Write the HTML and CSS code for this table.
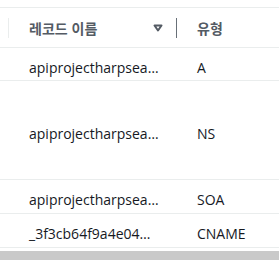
FILE: index.html
```html
<!DOCTYPE html>
<html lang="ko">
<head>
<meta charset="utf-8">
<link rel="stylesheet" href="styles.css">
</head>
<body>
<div class="table">
  <div class="row head">
    <div class="cell lead"><span class="sep light"></span></div>
    <div class="cell name">
      <span class="htext">레코드 이름</span>
      <svg class="sort" width="10" height="8" viewBox="0 0 10 8"><path d="M1.5 1.5 H8.5 L5 6.5 Z" fill="none" stroke="#545b64" stroke-width="2" stroke-linejoin="round"/></svg>
      <span class="sep dark"></span>
    </div>
    <div class="cell type"><span class="htext">유형</span></div>
  </div>
  <div class="row r1">
    <div class="cell lead"></div>
    <div class="cell name"><span class="val">apiprojectharpsea…</span></div>
    <div class="cell type"><span class="val">A</span></div>
  </div>
  <div class="row r2">
    <div class="cell lead"></div>
    <div class="cell name"><span class="val">apiprojectharpsea…</span></div>
    <div class="cell type"><span class="val">NS</span></div>
  </div>
  <div class="row r3">
    <div class="cell lead"></div>
    <div class="cell name"><span class="val">apiprojectharpsea…</span></div>
    <div class="cell type"><span class="val">SOA</span></div>
  </div>
  <div class="row r4">
    <div class="cell lead"></div>
    <div class="cell name"><span class="val">_3f3cb64f9a4e04…</span></div>
    <div class="cell type"><span class="val">CNAME</span></div>
  </div>
</div>
<div class="scrollbar"></div>
</body>
</html>
```
FILE: styles.css
```css
html, body {
  margin: 0;
  padding: 0;
  background: #ffffff;
}
body {
  width: 279px;
  height: 260px;
  overflow: hidden;
  font-family: "Open Sans", "Noto Sans CJK KR", sans-serif;
  color: #16191f;
  font-size: 14px;
}
.table {
  margin-top: 7px;
  border-top: 1px solid #eaeded;
}
.row {
  display: flex;
  border-bottom: 1px solid #eaeded;
}
.head { height: 39px; }
.r1 { height: 32px; }
.r2 { height: 98px; }
.r3 { height: 33px; }
.r4 { height: 33px; }
.cell {
  display: flex;
  align-items: center;
  position: relative;
}
.lead { width: 9px; flex: none; }
.name { width: 168px; flex: none; padding-left: 20px; box-sizing: border-box; }
.type { flex: 1; padding-left: 20px; }
.htext {
  font-family: "Noto Sans CJK KR", sans-serif;
  font-weight: 700;
  color: #545b64;
  font-size: 14px;
  line-height: 20px;
}
.val {
  line-height: 20px;
  padding-top: 7px;
}
.sort {
  margin-left: auto;
  margin-right: 14px;
  margin-top: 1px;
}
.sep {
  position: absolute;
  top: 10px;
  bottom: 9px;
  right: 0;
  width: 1px;
}
.sep.light { background: #eaeded; }
.sep.dark { background: #687078; }
.scrollbar {
  margin-top: 3px;
  height: 10px;
  background: #c9c9c9;
}
```
